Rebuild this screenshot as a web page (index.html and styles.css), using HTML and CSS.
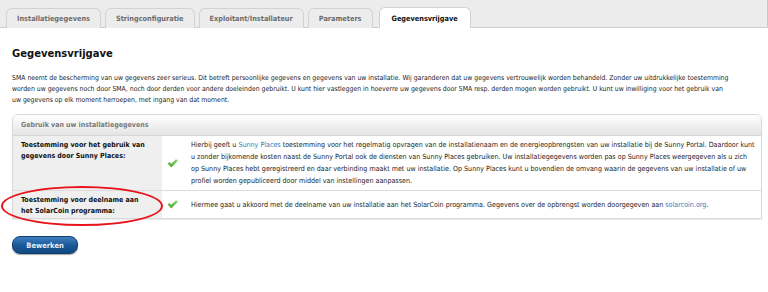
FILE: index.html
```html
<!DOCTYPE html>
<html>
<head>
<meta charset="utf-8">
<link rel="stylesheet" href="styles.css">
</head>
<body>
<div class="tabbar">
  <div class="tab">Installatiegegevens</div>
  <div class="tab">Stringconfiguratie</div>
  <div class="tab">Exploitant/Installateur</div>
  <div class="tab">Parameters</div>
  <div class="tab active">Gegevensvrijgave</div>
</div>
<div class="content">
  <h1 class="title">Gegevensvrijgave</h1>
  <p class="intro">SMA neemt de bescherming van uw gegevens zeer serieus. Dit betreft persoonlijke gegevens en gegevens van uw installatie. Wij garanderen dat uw gegevens vertrouwelijk worden behandeld. Zonder uw uitdrukkelijke toestemming<br>worden uw gegevens noch door SMA, noch door derden voor andere doeleinden gebruikt. U kunt hier vastleggen in hoeverre uw gegevens door SMA resp. derden mogen worden gebruikt. U kunt uw inwilliging voor het gebruik van<br>uw gegevens op elk moment herroepen, met ingang van dat moment.</p>
  <div class="panel">
    <div class="panel-head">Gebruik van uw installatiegegevens</div>
    <div class="row">
      <div class="label">Toestemming voor het gebruik van<br>gegevens door Sunny Places:</div>
      <div class="check"><svg width="11" height="9" viewBox="0 0 11 9"><defs><linearGradient id="g1" x1="0" y1="0" x2="0" y2="1"><stop offset="0" stop-color="#8fdc6a"/><stop offset="1" stop-color="#3fa627"/></linearGradient></defs><path d="M0.8 4.6 L2.6 3.2 L4.3 5.0 L9.2 0.6 L10.4 1.9 L4.3 8.2 Z" fill="url(#g1)" stroke="#4aa32c" stroke-width="0.4"/></svg></div>
      <div class="desc">Hierbij geeft u <a class="link">Sunny Places</a> toestemming voor het regelmatig opvragen van de installatienaam en de energieopbrengsten van uw installatie bij de Sunny Portal. Daardoor kunt<br>u zonder bijkomende kosten naast de Sunny Portal ook de diensten van Sunny Places gebruiken. Uw installatiegegevens worden pas op Sunny Places weergegeven als u zich<br>op Sunny Places hebt geregistreerd en daar verbinding maakt met uw installatie. Op Sunny Places kunt u bovendien de omvang waarin de gegevens van uw installatie of uw<br>profiel worden gepubliceerd door middel van instellingen aanpassen.</div>
    </div>
    <div class="row last">
      <div class="label">Toestemming voor deelname aan<br>het SolarCoin programma:</div>
      <div class="check"><svg width="11" height="9" viewBox="0 0 11 9"><path d="M0.8 4.6 L2.6 3.2 L4.3 5.0 L9.2 0.6 L10.4 1.9 L4.3 8.2 Z" fill="url(#g1)" stroke="#4aa32c" stroke-width="0.4"/></svg></div>
      <div class="desc single">Hiermee gaat u akkoord met de deelname van uw installatie aan het SolarCoin programma. Gegevens over de opbrengst worden doorgegeven aan <a class="link">solarcoin.org</a>.</div>
    </div>
  </div>
  <div class="actions"><span class="button">Bewerken</span></div>
</div>
<div class="oval"></div>
</body>
</html>
```
FILE: styles.css
```css
html, body {
  margin: 0;
  padding: 0;
  background: #ffffff;
  font-family: "DejaVu Sans Condensed", "DejaVu Sans", sans-serif;
  color: #222;
}
body {
  width: 768px;
  height: 292px;
  overflow: hidden;
  position: relative;
}
.tabbar {
  display: flex;
  align-items: flex-end;
  gap: 4px;
  height: 28px;
  box-sizing: border-box;
  padding: 8px 0 0 6px;
  background: #ececec;
  border-bottom: 1px solid #cfcfcf;
  border-right: 1px solid #c8c8c8;
}
.tab {
  height: 20px;
  box-sizing: border-box;
  padding: 0 10px;
  display: flex;
  align-items: center;
  font-size: 7.3px;
  font-weight: bold;
  color: #6e6e6e;
  background: #ececec;
  border: 1px solid #d2d2d2;
  border-bottom: none;
  border-radius: 6px 6px 0 0;
  margin-bottom: -1px;
}
.tab.active {
  background: #ffffff;
  color: #111;
  height: 21px;
  padding: 0 12px;
  margin-left: 2px;
}
.content {
  padding: 0 6px 0 12px;
}
.title {
  margin: 19px 0 0 0;
  font-size: 10px;
  font-weight: bold;
  color: #111;
  line-height: 14px;
  font-family: "DejaVu Sans", sans-serif;
}
.intro {
  margin: 12px 0 0 0;
  font-size: 6.85px;
  line-height: 11px;
  color: #222;
  white-space: nowrap;
}
.panel {
  margin-top: 8px;
  border: 1px solid #d8d8d8;
  border-radius: 6px 6px 0 0;
  overflow: hidden;
  box-shadow: 0 1px 1px rgba(0,0,0,0.08);
}
.panel-head {
  height: 20px;
  display: flex;
  align-items: center;
  padding-left: 8px;
  font-size: 7px;
  font-weight: bold;
  color: #7a7a7a;
  background: linear-gradient(#ffffff, #e4e4e4);
  border-bottom: 1px solid #d8d8d8;
}
.row {
  display: flex;
  border-bottom: 1px solid #dcdcdc;
}
.row.last {
  border-bottom: none;
}
.label {
  width: 141px;
  flex: none;
  background: #efefef;
  padding: 4px 0 0 8px;
  font-size: 7px;
  font-weight: bold;
  line-height: 11px;
  color: #111;
}
.row.last .label {
  padding-bottom: 1px;
}
.check {
  width: 29px;
  flex: none;
  display: flex;
  align-items: center;
  padding-left: 5px;
  box-sizing: border-box;
}
.desc {
  padding: 3px 0 3px 0;
  font-size: 7.1px;
  line-height: 12px;
  white-space: nowrap;
  color: #222;
}
.desc.single {
  display: flex;
  align-items: center;
  padding: 0;
  white-space: pre;
}
.link {
  color: #2a7dc0;
  text-decoration: none;
}
.actions {
  margin-top: 17px;
  display: flex;
}
.button {
  display: inline-flex;
  align-items: center;
  justify-content: center;
  width: 66px;
  height: 18px;
  box-sizing: border-box;
  border-radius: 8px;
  background: linear-gradient(#3d7fc0, #1a5796 55%, #124a82);
  border: 1px solid #0f3f6f;
  box-shadow: 0 1px 1px rgba(0,0,0,0.35);
  color: #e8f0f8;
  font-size: 7.5px;
  font-weight: bold;
}
.oval {
  position: absolute;
  left: 1px;
  top: 186px;
  width: 162px;
  height: 40px;
  box-sizing: border-box;
  border: 2px solid #e8141b;
  border-radius: 50%;
}
```
